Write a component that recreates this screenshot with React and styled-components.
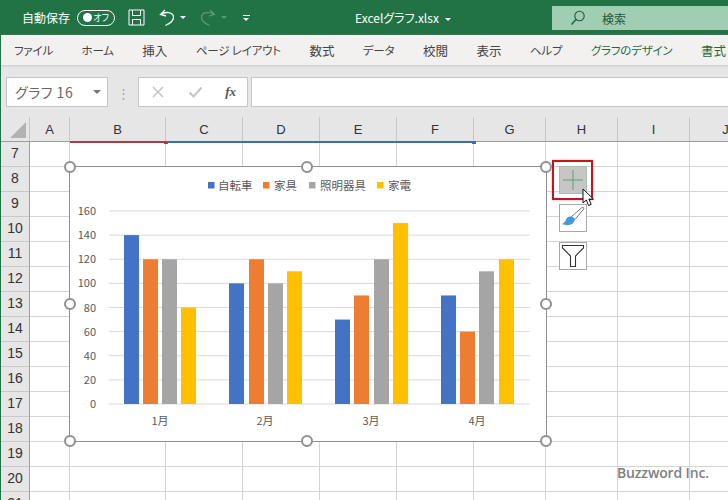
import React from 'react';
import styled, {createGlobalStyle} from "styled-components";

const GREEN = "#217346";
const JP = `"Noto Sans CJK JP", "Liberation Sans", sans-serif`;

const columns = [
    {name: 'A', width: 40},
    {name: 'B', width: 96},
    {name: 'C', width: 77},
    {name: 'D', width: 77},
    {name: 'E', width: 77},
    {name: 'F', width: 77},
    {name: 'G', width: 72},
    {name: 'H', width: 72},
    {name: 'I', width: 72},
    {name: 'J', width: 72},
];
const rowNumbers = [7, 8, 9, 10, 11, 12, 13, 14, 15, 16, 17, 18, 19, 20, 21];
const tabs = [
    {label: 'ファイル', kana: true},
    {label: 'ホーム', kana: true},
    {label: '挿入'},
    {label: 'ページ レイアウト', kana: true},
    {label: '数式'},
    {label: 'データ', kana: true},
    {label: '校閲'},
    {label: '表示'},
    {label: 'ヘルプ', kana: true},
    {label: 'グラフのデザイン', kana: true, chart: true},
    {label: '書式', chart: true},
];

const series = [
    {name: '自転車', color: '#4472c4', values: [140, 100, 70, 90], bars: [124, 229, 335, 441], legend: [208, 218]},
    {name: '家具', color: '#ed7d31', values: [120, 120, 90, 60], bars: [143, 249, 354, 460], legend: [263, 274]},
    {name: '照明器具', color: '#a5a5a5', values: [120, 100, 120, 110], bars: [162, 268, 374, 479], legend: [309, 320]},
    {name: '家電', color: '#ffc000', values: [80, 110, 150, 120], bars: [181, 287, 393, 499], legend: [377, 388]},
];
const months = [{label: '1月', x: 160}, {label: '2月', x: 265}, {label: '3月', x: 371}, {label: '4月', x: 477}];
const ticks = [0, 20, 40, 60, 80, 100, 120, 140, 160];
const handles = [[0, 0], [237, 0], [476, 0], [0, 137], [476, 137], [0, 274], [237, 274], [476, 274]];

const yOf = (v) => 404 - v * 193 / 160;

const Chart = () => (
    <ChartSvg viewBox="70 167 476 274">
        {ticks.map((t) => (
            <g key={t}>
                <line x1="109" x2="530" y1={yOf(t)} y2={yOf(t)} stroke="#d9d9d9" strokeWidth="1"/>
                <AxisText x="96" y={yOf(t) + 4} textAnchor="end">{t}</AxisText>
            </g>
        ))}
        {series.map((s) => (
            <g key={s.name}>
                <rect x={s.legend[0]} y="182" width="6.5" height="6.5" fill={s.color}/>
                <LegendText x={s.legend[1]} y="190">{s.name}</LegendText>
                {s.values.map((v, i) => (
                    <rect key={i} x={s.bars[i]} y={yOf(v)} width="15" height={404 - yOf(v)} fill={s.color}/>
                ))}
            </g>
        ))}
        {months.map((m) => (
            <AxisText key={m.label} x={m.x} y="425" textAnchor="middle">{m.label}</AxisText>
        ))}
    </ChartSvg>
);

const App = () => {
    return (
        <Window>
            <GlobalStyle/>
            <TitleBar>
                <AutoSave>自動保存</AutoSave>
                <Toggle><span>オフ</span></Toggle>
                <QuickIcon width="17" height="17" viewBox="0 0 17 17" $left={13}>
                    <path d="M1 1h15v15H1zM4.500 1v5.500h8V1M4.500 16v-5.500h8V16" fill="none" stroke="#fff" strokeWidth="1"/>
                </QuickIcon>
                <QuickIcon width="16" height="18" viewBox="0 0 16 18" $left={14}>
                    <path d="M6 1L1.500 5.500 7 7M1.800 5.500C6 2.500 14.500 2.500 14.500 8.500c0 4-4 6-8 8" fill="none" stroke="#fff" strokeWidth="1.300"/>
                </QuickIcon>
                <Caret $left={5} $color="#fff"/>
                <QuickIcon width="16" height="18" viewBox="0 0 16 18" $left={14}>
                    <path d="M10 1l4.500 4.500L9 7M14.200 5.500C10 2.500 1.500 2.500 1.500 8.500c0 4 4 6 8 8" fill="none" stroke="#5c9a78" strokeWidth="1.200"/>
                </QuickIcon>
                <Caret $left={5} $color="#5c9a78"/>
                <QatMenu/>
                <FileName>Excelグラフ.xlsx<Caret $left={6} $color="#fff"/></FileName>
                <SearchBox>
                    <svg width="16" height="16" viewBox="0 0 16 16">
                        <circle cx="9.500" cy="6" r="4.700" fill="none" stroke="#1d5c3a" strokeWidth="1.100"/>
                        <path d="M6 9.500L1.500 14.500" stroke="#1d5c3a" strokeWidth="1.300"/>
                    </svg>
                    <span>検索</span>
                </SearchBox>
            </TitleBar>
            <TabBar>
                {tabs.map((t) => <Tab key={t.label} $kana={t.kana} $chart={t.chart}>{t.label}</Tab>)}
            </TabBar>
            <FormulaBar>
                <NameBox>グラフ 16<NameCaret/></NameBox>
                <Grip>⋮</Grip>
                <FormulaButtons>
                    <svg width="14" height="14" viewBox="0 0 14 14"><path d="M2 2l10 10M12 2L2 12" stroke="#c4c4c4" strokeWidth="1.500"/></svg>
                    <svg width="15" height="14" viewBox="0 0 15 14"><path d="M1.500 7.500l4 4 8-9" fill="none" stroke="#c4c4c4" strokeWidth="2"/></svg>
                    <FxLabel>fx</FxLabel>
                </FormulaButtons>
                <FormulaInput/>
            </FormulaBar>
            <Sheet>
                <HeaderRow>
                    <Corner><CornerMark/></Corner>
                    {columns.map((c) => <ColHead key={c.name} $w={c.width}>{c.name}</ColHead>)}
                </HeaderRow>
                {rowNumbers.map((n) => (
                    <Row key={n}>
                        <RowHead>{n}</RowHead>
                        {columns.map((c) => <Cell key={c.name} $w={c.width}/>)}
                    </Row>
                ))}
                <RangeLine $left={70} $w={96} $color="#a5404a"/>
                <RangeLine $left={167} $w={307} $color="#3f6f9f"/>
                <ChartFrame>
                    <Chart/>
                    {handles.map(([x, y]) => <Handle key={`${x}-${y}`} $x={x} $y={y}/>)}
                </ChartFrame>
                <ActiveOutline/>
                <ToolButton $top={49} $active>
                    <svg width="20" height="20" viewBox="0 0 20 20"><path d="M10 0v20M0 10h20" stroke="#5aa36d" strokeWidth="1"/></svg>
                </ToolButton>
                <ToolButton $top={87}>
                    <svg width="26" height="26" viewBox="0 0 26 26">
                        <path d="M22 2.500c1.300-.8 2.300.2 1.700 1.500L15 14.500l-3.500-3z" fill="#fff" stroke="#777" strokeWidth="1"/>
                        <path d="M11.500 11.500c-2.500-.5-4.500.5-5.500 3-.7 2-2 3.500-4 4.500 3.500 2 9.500 1.500 11.500-1.500 1-1.500 1.500-3 1-4z" fill="#3f9ade"/>
                    </svg>
                </ToolButton>
                <ToolButton $top={125}>
                    <svg width="24" height="24" viewBox="0 0 24 24">
                        <path d="M1.500 1.500h21v2.500L14.500 12v10.500h-5V12L1.500 4z" fill="#fff" stroke="#333" strokeWidth="1.100"/>
                    </svg>
                </ToolButton>
                <Pointer width="13" height="20" viewBox="0 0 13 20">
                    <path d="M1 1v14l3.300-3 2.300 5.500 2.600-1.100-2.300-5.300h4.600z" fill="#fff" stroke="#111" strokeWidth="1"/>
                </Pointer>
                <Watermark>Buzzword Inc.</Watermark>
            </Sheet>
        </Window>
    );
};
export default App;

const GlobalStyle = createGlobalStyle`
  html, body {
    margin: 0;
    padding: 0;
    background: #fff;
  }
  body {
    font-family: ${JP};
    font-feature-settings: "palt";
  }
`;

const Window = styled.div`
  display: flex;
  flex-direction: column;
  width: 728px;
  height: 500px;
  overflow: hidden;
  box-sizing: border-box;
  border-left: 1px solid ${GREEN};
`;

const TitleBar = styled.div`
  position: relative;
  display: flex;
  align-items: center;
  flex: none;
  height: 35px;
  padding-left: 21px;
  background: ${GREEN};
  color: #fff;
`;

const AutoSave = styled.span`
  font-size: 12px;
  width: 49px;
`;

const Toggle = styled.div`
  position: relative;
  box-sizing: border-box;
  width: 38px;
  height: 16px;
  margin-left: 6px;
  border: 1px solid #fff;
  border-radius: 8px;
  font-size: 9px;
  line-height: 14px;
  text-align: right;
  padding-right: 5px;

  &::before {
    content: "";
    position: absolute;
    left: 5px;
    top: 2.500px;
    width: 9px;
    height: 9px;
    border-radius: 50%;
    background: #fff;
  }
`;

const QuickIcon = styled.svg`
  margin-left: ${(p) => p.$left}px;
  flex: none;
`;

const Caret = styled.i`
  display: inline-block;
  margin-left: ${(p) => p.$left}px;
  vertical-align: middle;
  width: 0;
  height: 0;
  border-left: 3px solid transparent;
  border-right: 3px solid transparent;
  border-top: 3px solid ${(p) => p.$color};
`;

const QatMenu = styled.i`
  display: block;
  box-sizing: border-box;
  width: 7px;
  height: 6px;
  margin-left: 16px;
  border-top: 1px solid #fff;
  position: relative;

  &::after {
    content: "";
    position: absolute;
    left: 0;
    top: 2px;
    border-left: 3.500px solid transparent;
    border-right: 3.500px solid transparent;
    border-top: 3.500px solid #fff;
  }
`;

const FileName = styled.div`
  margin-left: 105px;
  font-size: 12px;
  white-space: nowrap;
  width: 200px;
`;

const SearchBox = styled.div`
  position: absolute;
  left: 551px;
  top: 6px;
  right: 0;
  height: 24px;
  display: flex;
  align-items: center;
  gap: 16px;
  padding-left: 18px;
  background: #a0ceb2;
  color: #26573c;
  font-size: 12px;
`;

const TabBar = styled.div`
  display: flex;
  align-items: center;
  flex: none;
  gap: 28.500px;
  height: 30px;
  padding-left: 13px;
  background: #f3f1f0;
  box-shadow: 0 1px 2px #c8c8c8;
  position: relative;
  white-space: nowrap;
`;

const Tab = styled.span`
  font-size: ${(p) => p.$kana ? "11.500px" : "12.500px"};
  letter-spacing: ${(p) => p.$kana ? "-0.200px" : "0"};
  color: ${(p) => p.$chart ? "#1e6b41" : "#444"};
`;

const FormulaBar = styled.div`
  display: flex;
  align-items: center;
  flex: none;
  height: 52px;
  padding: 2px 0 0 5px;
  box-sizing: border-box;
  background: #e6e6e6;
`;

const NameBox = styled.div`
  position: relative;
  box-sizing: border-box;
  width: 102px;
  height: 30px;
  line-height: 28px;
  padding-left: 8px;
  background: #fff;
  border: 1px solid #c6c6c6;
  color: #666;
  font-size: 14px;
  letter-spacing: 0.500px;
`;

const NameCaret = styled.i`
  position: absolute;
  right: 6px;
  top: 12px;
  border-left: 4px solid transparent;
  border-right: 4px solid transparent;
  border-top: 4px solid #777;
`;

const Grip = styled.span`
  width: 30px;
  text-align: center;
  color: #a8a8a8;
  font-size: 13px;
`;

const FormulaButtons = styled.div`
  display: flex;
  align-items: center;
  justify-content: space-between;
  box-sizing: border-box;
  width: 110px;
  height: 30px;
  padding: 0 11px 0 12px;
  background: #fff;
  border: 1px solid #c6c6c6;
`;

const FxLabel = styled.span`
  font-family: "Liberation Serif", serif;
  font-style: italic;
  font-weight: bold;
  font-size: 13px;
  color: #555;
`;

const FormulaInput = styled.div`
  flex: 1;
  height: 30px;
  margin-left: 3px;
  box-sizing: border-box;
  background: #fff;
  border: 1px solid #c6c6c6;
  border-right: 0;
`;

const Sheet = styled.div`
  position: relative;
  flex: 1;
  background: #fff;
`;

const HeaderRow = styled.div`
  display: flex;
  height: 25px;
  box-sizing: border-box;
  background: #e6e6e6;
  border-bottom: 1px solid #9d9d9d;
`;

const Corner = styled.div`
  position: relative;
  flex: none;
  width: 29px;
  border-right: 1px solid #c8c8c8;
  box-sizing: border-box;
`;

const CornerMark = styled.i`
  position: absolute;
  right: 3px;
  bottom: 3px;
  border-left: 16px solid transparent;
  border-bottom: 16px solid #b2b2b2;
`;

const ColHead = styled.div`
  flex: none;
  box-sizing: border-box;
  width: ${(p) => p.$w}px;
  border-right: 1px solid #c8c8c8;
  text-align: center;
  font-family: "Liberation Sans", sans-serif;
  font-size: 13px;
  line-height: 25px;
  color: #333;
`;

const Row = styled.div`
  display: flex;
  height: 25px;
`;

const RowHead = styled.div`
  flex: none;
  box-sizing: border-box;
  width: 29px;
  background: #e6e6e6;
  border-right: 1px solid #9d9d9d;
  border-bottom: 1px solid #c8c8c8;
  text-align: center;
  font-family: "Liberation Sans", sans-serif;
  font-size: 14px;
  line-height: 23px;
  color: #333;
`;

const Cell = styled.div`
  flex: none;
  box-sizing: border-box;
  width: ${(p) => p.$w}px;
  border-right: 1px solid #d4d4d4;
  border-bottom: 1px solid #d4d4d4;
`;

const RangeLine = styled.div`
  position: absolute;
  left: ${(p) => p.$left - 1}px;
  top: 24px;
  width: ${(p) => p.$w}px;
  height: 2px;
  background: ${(p) => p.$color};

  &::after {
    content: "";
    position: absolute;
    right: -2px;
    top: 0;
    width: 4px;
    height: 3px;
    background: ${(p) => p.$color};
  }
`;

const ChartFrame = styled.div`
  position: absolute;
  left: 69px;
  top: 50px;
  width: 476px;
  height: 274px;
  background: #fff;
  outline: 1px solid #8f8f8f;
`;

const ChartSvg = styled.svg`
  display: block;
  width: 476px;
  height: 274px;
`;

const AxisText = styled.text`
  font-family: ${JP};
  font-size: 11px;
  fill: #595959;
`;

const LegendText = styled(AxisText)`
  font-size: 11.500px;
`;

const Handle = styled.i`
  position: absolute;
  left: ${(p) => p.$x - 6}px;
  top: ${(p) => p.$y - 6}px;
  box-sizing: border-box;
  width: 12px;
  height: 12px;
  border-radius: 50%;
  background: #fff;
  border: 2px solid #8f8f8f;
`;

const ActiveOutline = styled.div`
  position: absolute;
  left: 551px;
  top: 43px;
  width: 41px;
  height: 40px;
  box-sizing: border-box;
  border: 2px solid #c3161c;
  box-shadow: 0 0 2px #e8a0a0;
`;

const ToolButton = styled.div`
  position: absolute;
  left: 558px;
  top: ${(p) => p.$top}px;
  display: flex;
  align-items: center;
  justify-content: center;
  box-sizing: border-box;
  width: 28px;
  height: 28px;
  background: ${(p) => p.$active ? "#c6c6c6" : "#fff"};
  border: 1px solid ${(p) => p.$active ? "#a9bdb0" : "#a8a8a8"};
`;

const Pointer = styled.svg`
  position: absolute;
  left: 581px;
  top: 71px;
`;

const Watermark = styled.div`
  position: absolute;
  left: 616px;
  top: 346px;
  font-family: "Open Sans", sans-serif;
  font-weight: 600;
  font-size: 14px;
  letter-spacing: -0.150px;
  color: #7f7f7f;
  white-space: nowrap;
`;
